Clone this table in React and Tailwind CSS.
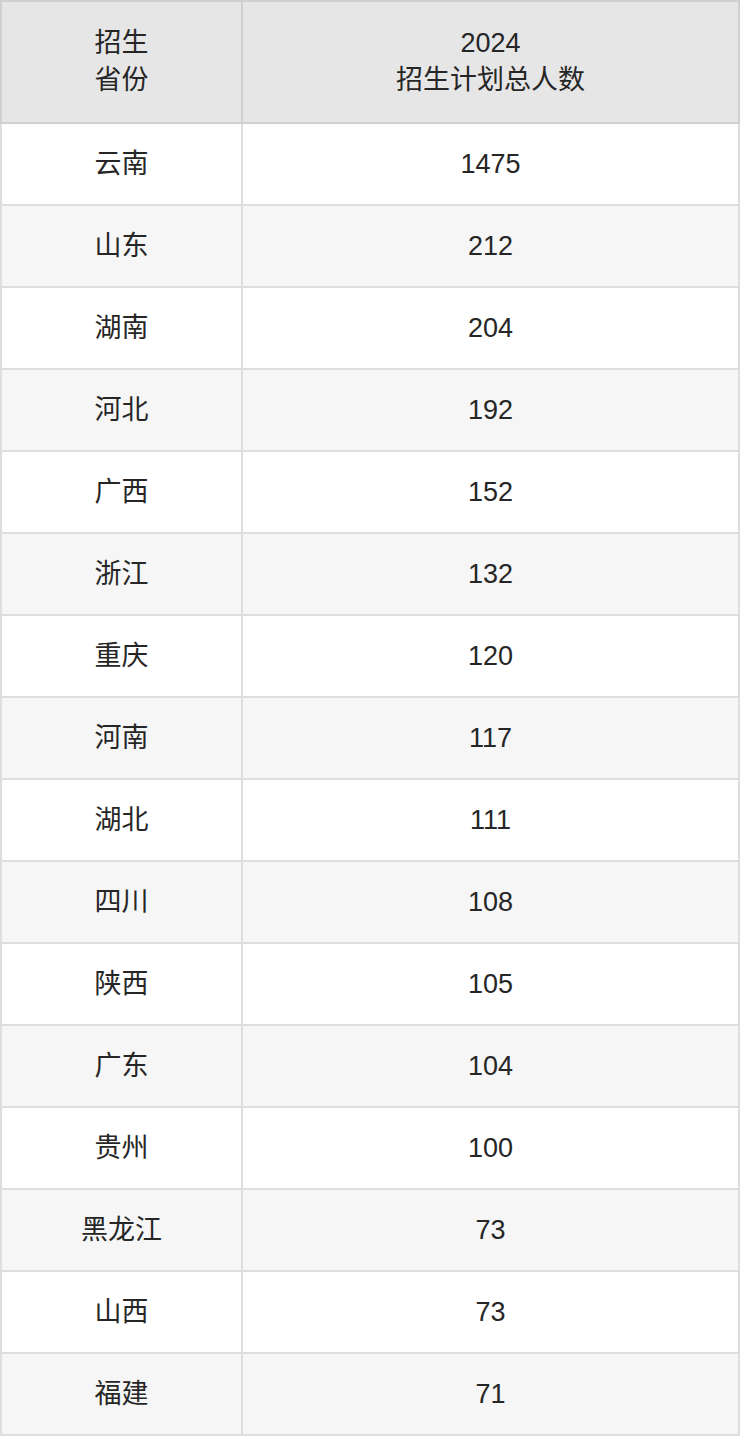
import React from "react";

const rows = [
  ["云南", "1475"],
  ["山东", "212"],
  ["湖南", "204"],
  ["河北", "192"],
  ["广西", "152"],
  ["浙江", "132"],
  ["重庆", "120"],
  ["河南", "117"],
  ["湖北", "111"],
  ["四川", "108"],
  ["陕西", "105"],
  ["广东", "104"],
  ["贵州", "100"],
  ["黑龙江", "73"],
  ["山西", "73"],
  ["福建", "71"],
];

export default function App() {
  return (
    <div className="w-[740px] bg-white font-['Liberation_Sans','Noto_Sans_CJK_SC',sans-serif] text-[27px] text-[#262626]">
      <table className="w-[740px] table-fixed border-collapse border-2 border-[#d0d0d0]">
        <colgroup>
          <col className="w-[241px]" />
          <col />
        </colgroup>
        <thead>
          <tr className="h-[122px] bg-[#e6e6e6]">
            <th className="border-2 border-[#d0d0d0] font-normal leading-[37px] text-center">
              招生
              <br />
              省份
            </th>
            <th className="border-2 border-[#d0d0d0] font-normal leading-[37px] text-center">
              2024
              <br />
              招生计划总人数
            </th>
          </tr>
        </thead>
        <tbody>
          {rows.map(([p, n], i) => (
            <tr key={i} className={i % 2 ? "h-[82px] bg-[#f6f6f6]" : "h-[82px] bg-white"}>
              <td className="border-2 border-[#dddddd] text-center">{p}</td>
              <td className="border-2 border-[#dddddd] text-center">{n}</td>
            </tr>
          ))}
        </tbody>
      </table>
    </div>
  );
}
